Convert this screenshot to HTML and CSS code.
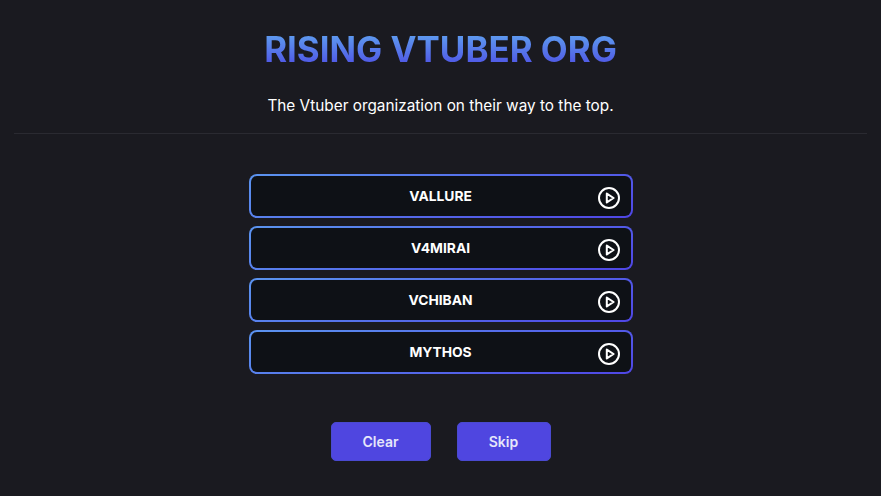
FILE: index.html
```html
<!DOCTYPE html>
<html lang="en">
<head>
<meta charset="utf-8">
<title>Rising Vtuber Org</title>
<link rel="stylesheet" href="styles.css">
</head>
<body>
<header class="head">
  <h1 class="title">RISING VTUBER ORG</h1>
  <p class="sub">The Vtuber organization on their way to the top.</p>
</header>
<hr class="rule">
<main class="list">
  <div class="item"><span class="name">VALLURE</span><svg class="play" viewBox="0 0 24 24"><circle cx="12" cy="12" r="10"/><path d="M9.8 7.6l6.8 4.4-6.8 4.4z"/></svg></div>
  <div class="item"><span class="name">V4MIRAI</span><svg class="play" viewBox="0 0 24 24"><circle cx="12" cy="12" r="10"/><path d="M9.8 7.6l6.8 4.4-6.8 4.4z"/></svg></div>
  <div class="item"><span class="name">VCHIBAN</span><svg class="play" viewBox="0 0 24 24"><circle cx="12" cy="12" r="10"/><path d="M9.8 7.6l6.8 4.4-6.8 4.4z"/></svg></div>
  <div class="item"><span class="name">MYTHOS</span><svg class="play" viewBox="0 0 24 24"><circle cx="12" cy="12" r="10"/><path d="M9.8 7.6l6.8 4.4-6.8 4.4z"/></svg></div>
</main>
<footer class="actions">
  <button class="btn btn-clear">Clear</button>
  <button class="btn btn-skip">Skip</button>
</footer>
</body>
</html>
```
FILE: styles.css
```css
* { box-sizing: border-box; }
html, body { height: 100%; }
body {
  margin: 0;
  overflow: hidden;
  background: #1a1a20;
  color: #fff;
  font-family: Inter, "Liberation Sans", sans-serif;
}
.head { padding-top: 29px; text-align: center; }
.title {
  margin: 0;
  font-size: 34.9px;
  line-height: 40px;
  font-weight: 700;
  background: linear-gradient(180deg, #5f9ff0 10%, #4f55e5 90%);
  -webkit-background-clip: text;
  background-clip: text;
  color: transparent;
}
.sub {
  margin: 0;
  padding-top: 25px;
  font-size: 15.35px;
  line-height: 24px;
  font-weight: 400;
}
.rule {
  margin: 15px 14px 0;
  border: 0;
  height: 1px;
  background: #2a2a31;
}
.list {
  width: 384px;
  margin: 40px auto 0;
  display: flex;
  flex-direction: column;
  gap: 8px;
}
.item {
  position: relative;
  height: 44px;
  display: flex;
  align-items: center;
  justify-content: center;
  border: 2px solid transparent;
  border-radius: 8px;
  background:
    linear-gradient(#0e1116, #0e1116) padding-box,
    linear-gradient(160deg, #5b94ef, #4f46e5) border-box;
}
.name {
  font-size: 13.8px;
  line-height: 20px;
  font-weight: 700;
  margin-top: -1px;
}
.play {
  position: absolute;
  right: 10px;
  top: 10px;
  width: 24px;
  height: 24px;
  fill: none;
  stroke: #fff;
  stroke-width: 2;
  stroke-linecap: round;
  stroke-linejoin: round;
}
.actions {
  margin-top: 48px;
  display: flex;
  justify-content: center;
  gap: 26px;
}
.btn {
  height: 39px;
  border: 1px solid #4a4ad0;
  border-radius: 5px;
  background: #4f46e0;
  color: #e6e6fa;
  font-family: inherit;
  font-size: 14px;
  font-weight: 600;
  padding: 0;
}
.btn-clear { width: 100px; }
.btn-skip { width: 94px; }
```
